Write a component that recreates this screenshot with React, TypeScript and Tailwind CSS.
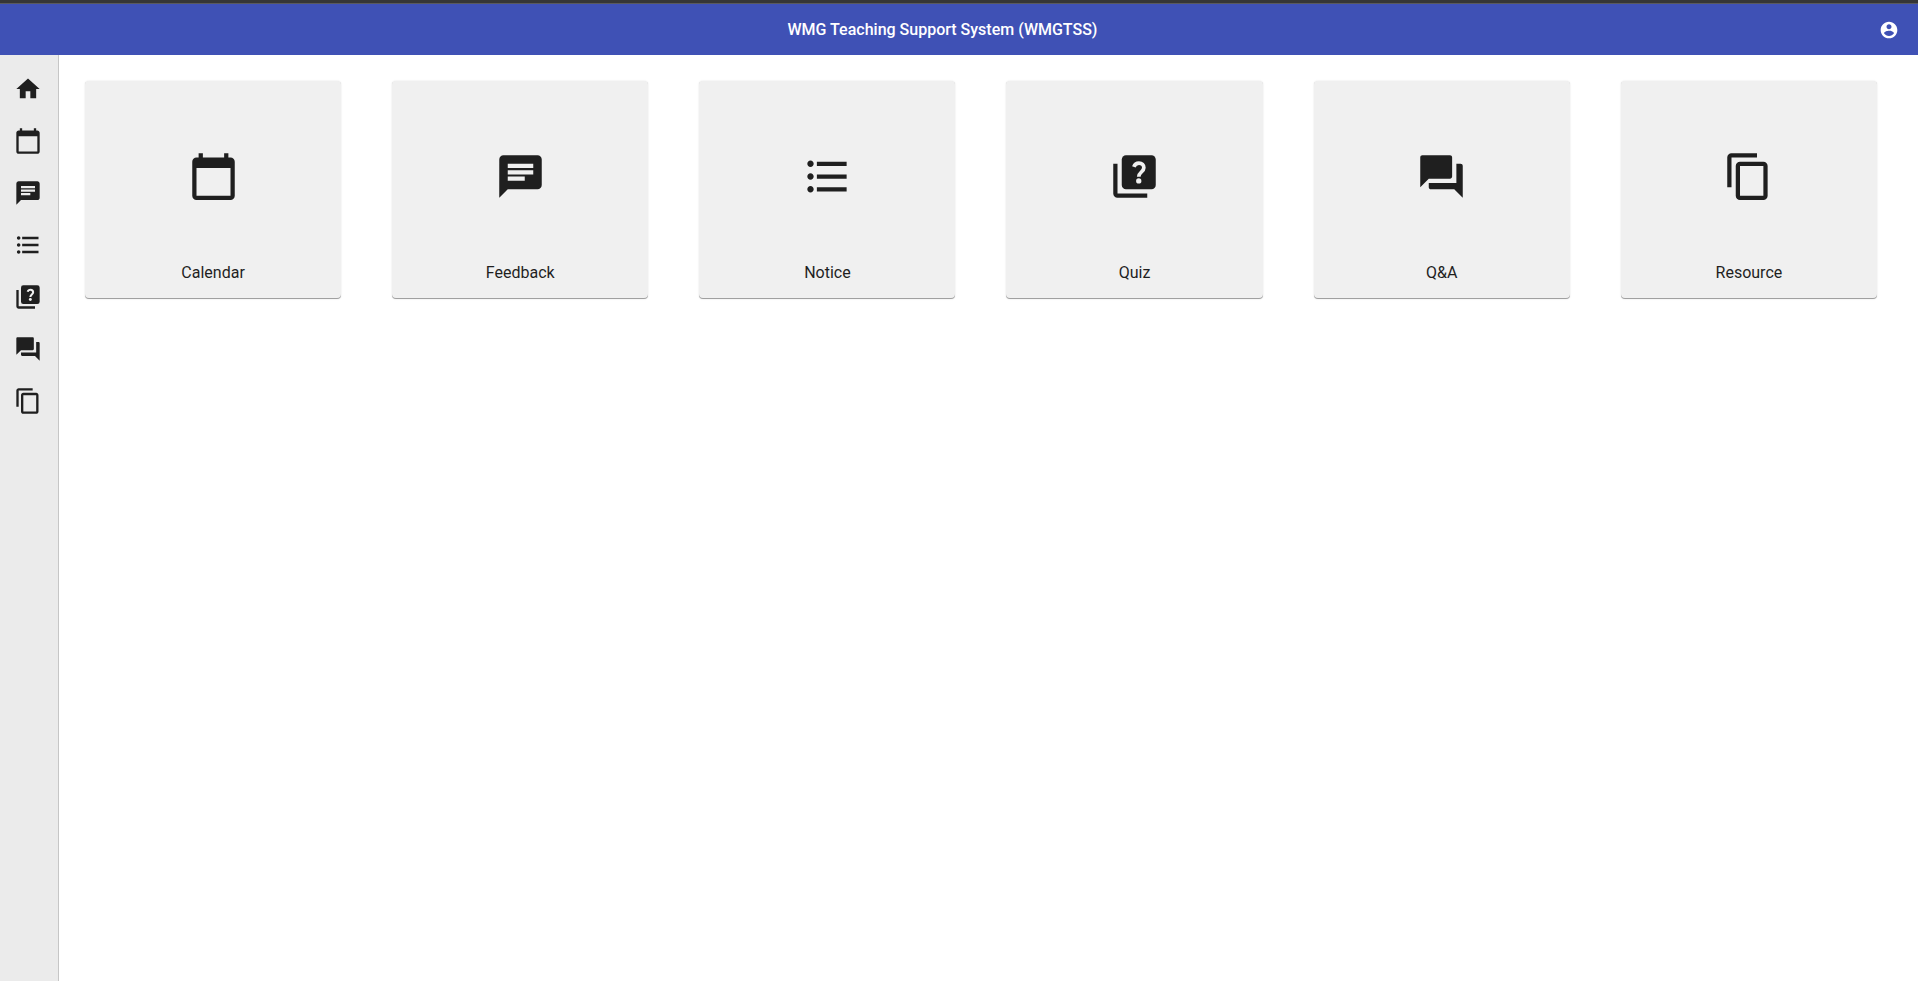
import type { ComponentType } from "react";
import {
  MdCalendarToday,
  MdChat,
  MdContentCopy,
  MdFormatListBulleted,
  MdHome,
  MdQuestionAnswer,
} from "react-icons/md";

type IconProps = { className?: string };
type Section = { label: string; Icon: ComponentType<IconProps> };

function QuizIcon({ className }: IconProps) {
  return (
    <svg viewBox="0 0 24 24" fill="currentColor" aria-hidden="true" className={className}>
      <path d="M4 6H2v14c0 1.1.9 2 2 2h14v-2H4V6z" />
      <rect x="6" y="2" width="16" height="16" rx="2" />
      <path
        d="M11.7 7.5C12.1 6.3 13 5.7 14.1 5.7C15.5 5.7 16.4 6.6 16.4 7.9C16.4 9.8 14 10 14 12.1"
        fill="none"
        stroke="#f0f0f0"
        strokeWidth="1.75"
      />
      <circle cx="14" cy="14.1" r="1.25" fill="#f0f0f0" />
    </svg>
  );
}

function AccountIcon({ className }: IconProps) {
  return (
    <svg viewBox="0 0 24 24" fill="currentColor" aria-hidden="true" className={className}>
      <path d="M12 2C6.48 2 2 6.48 2 12s4.48 10 10 10 10-4.48 10-10S17.52 2 12 2zm0 3c1.66 0 3 1.34 3 3s-1.34 3-3 3-3-1.34-3-3 1.34-3 3-3zm0 14.2c-2.5 0-4.71-1.28-6-3.22.03-1.99 4-3.08 6-3.08 1.99 0 5.97 1.09 6 3.08-1.29 1.94-3.5 3.22-6 3.22z" />
    </svg>
  );
}

const sections: Section[] = [
  { label: "Calendar", Icon: MdCalendarToday },
  { label: "Feedback", Icon: MdChat },
  { label: "Notice", Icon: MdFormatListBulleted },
  { label: "Quiz", Icon: QuizIcon },
  { label: "Q&A", Icon: MdQuestionAnswer },
  { label: "Resource", Icon: MdContentCopy },
];

const navItems: Section[] = [{ label: "Home", Icon: MdHome }, ...sections];

function Header() {
  return (
    <header className="flex h-[55px] items-center border-t-[3px] border-[#363636] bg-[#3f51b5] pt-0.5 pr-[9px] pl-4 text-white shadow-[inset_0_1px_0_#5a5a5e]">
      <h1 className="flex-1 text-center text-base font-medium">WMG Teaching Support System (WMGTSS)</h1>
      <button type="button" aria-label="Account" className="flex size-10 items-center justify-center">
        <AccountIcon className="size-5" />
      </button>
    </header>
  );
}

function Sidebar() {
  return (
    <nav className="flex w-[59px] shrink-0 flex-col gap-6 border-r border-[#c6c6c6] bg-[#ebebeb] pt-5 pl-[14px]">
      {navItems.map(({ label, Icon }) => (
        <a key={label} href="#" aria-label={label} className="size-7">
          <Icon className="size-7" />
        </a>
      ))}
    </nav>
  );
}

function SectionCard({ label, Icon }: Section) {
  return (
    <a
      href="#"
      className="flex h-[218px] flex-col items-center rounded bg-[#f0f0f0] pt-[70px] shadow-[inset_0_-1px_0_#a0a0a0,0_0_2px_rgba(0,0,0,0.12)]"
    >
      <Icon className="size-[51px]" />
      <span className="mt-[59px] text-base leading-6">{label}</span>
    </a>
  );
}

export default function App() {
  return (
    <div className="flex min-h-screen flex-col bg-white font-['Roboto',sans-serif] text-[#1f1f1f]">
      <Header />
      <div className="flex flex-1">
        <Sidebar />
        <main className="grid flex-1 grid-cols-6 content-start gap-[51px] pt-[26px] pr-[41px] pl-[26px]">
          {sections.map((section) => (
            <SectionCard key={section.label} {...section} />
          ))}
        </main>
      </div>
    </div>
  );
}
